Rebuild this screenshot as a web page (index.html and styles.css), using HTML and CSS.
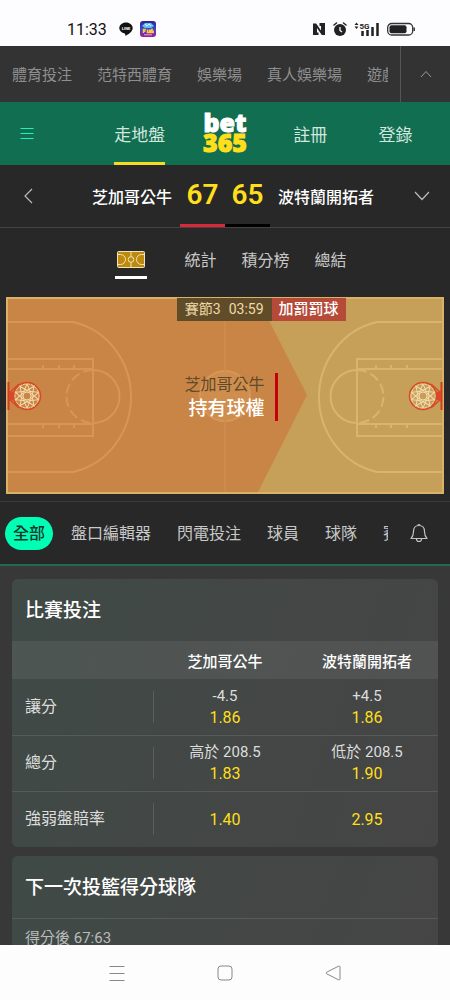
FILE: index.html
```html
<!DOCTYPE html>
<html lang="zh-Hant">
<head>
  <meta charset="UTF-8" />
  <meta name="viewport" content="width=device-width, initial-scale=1.0"/>
  <title>bet365</title>
  <link rel="stylesheet" href="styles.css">
</head>
<body>
  <div class="screen">
    <div class="status-bar">
      <div class="status-group">
        <span class="time">11:33</span>
        <svg class="line-icon" width="14" height="14" viewBox="0 0 14 14">
          <path d="M7 0.5C3.200 0.500 0.300 3 0.300 6.100c0 2.800 2.400 5 5.700 5.500l.4 2.200c3-1.300 7.300-4 7.300-7.700C13.700 3 10.800 0.500 7 0.500z" fill="#111"/>
          <text x="7" y="7.600" text-anchor="middle" font-size="4" font-weight="700" fill="#fff">LINE</text>
        </svg>
        <svg width="16" height="16" viewBox="0 0 16 16">
          <defs>
            <linearGradient id="app" x1="0" y1="0" x2="0" y2="1">
              <stop offset="0" stop-color="#3a1c8c"/>
              <stop offset="0.5" stop-color="#3a48c8"/>
              <stop offset="1" stop-color="#a01a9c"/>
            </linearGradient>
          </defs>
          <rect width="16" height="16" rx="3" fill="url(#app)"/>
          <path d="M2 5l3-3h6l3 3-3 2H5z" fill="#5cc4f4"/>
          <path d="M5 3l2 2 2-2 2 2" fill="none" stroke="#dff6ff"/>
          <path d="M3.500 12V8.500h2.500M3.500 10.200h2M7.500 8.500v3h2v-3M11 8.500v3h2.200v-1.200H11.500M11 8.500h2" fill="none" stroke="#ffc93c" stroke-width="1.500"/>
          <path d="M4 13.800h8" stroke="#f5a3d8"/>
        </svg>
      </div>
      <div class="status-group">
        <svg width="14" height="14" viewBox="0 0 14 14">
          <path d="M1 1.500h3.200L9 8.500V4H7.500V1H13v12H9.800L5 6v4.500h1.500V13H1z" fill="#222"/>
        </svg>
        <svg width="14" height="14" viewBox="0 0 14 14">
          <circle cx="7" cy="8" r="6" fill="#222"/>
          <path d="M1 3l2.500-2M13 3l-2.500-2" stroke="#222" stroke-width="1.500" stroke-linecap="round"/>
          <path d="M7 5v3.500l2 1.500" fill="none" stroke="#fff" stroke-width="1.300"/>
        </svg>
        <svg width="26" height="14" viewBox="0 0 26 14">
          <path d="M0.500 3L2.500 0.500L4.500 3zM0.500 4.500h4L2.500 7z" fill="#222"/>
          <text x="5.500" y="6.500" font-size="8" font-weight="700" fill="#222">5G</text>
          <path d="M8.500 14V9M13.500 14V8M18.500 14V5M23.500 14V1" stroke="#222" stroke-width="2.500"/>
        </svg>
        <svg width="28" height="14" viewBox="0 0 28 14">
          <rect x="0.700" y="1.500" width="25" height="11.500" rx="4" fill="none" stroke="#333" stroke-width="1.300"/>
          <rect x="2.500" y="3.300" width="17" height="8" rx="2" fill="#222"/>
          <path d="M27.200 5.500v3.500" stroke="#333" stroke-width="1.500"/>
        </svg>
      </div>
    </div>

    <nav class="product-nav">
      <div class="product-links">
        <a href="#">體育投注</a>
        <a href="#">范特西體育</a>
        <a href="#">娛樂場</a>
        <a href="#">真人娛樂場</a>
        <a href="#">遊戲</a>
      </div>
      <button class="collapse-btn" aria-label="收起">
        <svg width="12" height="8" viewBox="0 0 12 8"><path d="M1 7l5-5.500L11 7" fill="none" stroke="#999"/></svg>
      </button>
    </nav>

    <header class="header">
      <button class="menu-btn" aria-label="選單">
        <svg width="14" height="14" viewBox="0 0 14 14"><path d="M0.500 1.500h13M0.500 6.500h13M0.500 11.500h13" stroke="#1ef5b0" stroke-width="1.200"/></svg>
      </button>
      <a class="header-link active" href="#">走地盤</a>
      <a class="logo" href="#"><span>bet</span><span class="logo-num">365</span></a>
      <a class="header-link" href="#">註冊</a>
      <a class="header-link" href="#">登錄</a>
    </header>

    <section class="match-bar">
      <button class="arrow-btn" aria-label="返回">
        <svg width="10" height="16" viewBox="0 0 10 16"><path d="M9 1L2 8l7 7" fill="none" stroke="#bbb" stroke-width="1.200"/></svg>
      </button>
      <span class="team home">芝加哥公牛</span>
      <span class="score home-score">67</span>
      <span class="score away-score">65</span>
      <span class="team away">波特蘭開拓者</span>
      <button class="arrow-btn" aria-label="更多賽事">
        <svg width="16" height="10" viewBox="0 0 16 10"><path d="M1 1l7 7.500L15 1" fill="none" stroke="#bbb" stroke-width="1.200"/></svg>
      </button>
    </section>

    <section class="match-live">
      <div class="view-tabs">
        <button class="view-tab court-tab active" aria-label="球場">
          <svg width="28" height="17" viewBox="0 0 28 17">
            <rect x="0.500" y="0.500" width="27" height="16" rx="1" fill="#be8a0c" stroke="#efe3c2"/>
            <path d="M14 1v4.500M14 11.500V16M1 3.500h2.500a5 5 0 0 1 0 10H1M27 3.500h-2.500a5 5 0 0 0 0 10H27" fill="none" stroke="#efe3c2"/>
            <circle cx="14" cy="8.500" r="2.800" fill="none" stroke="#efe3c2"/>
          </svg>
        </button>
        <button class="view-tab">統計</button>
        <button class="view-tab">積分榜</button>
        <button class="view-tab">總結</button>
      </div>

      <div class="court">
        <svg class="court-svg" viewBox="0 0 438 197">
          <defs>
            <g id="half" fill="none" stroke-width="2">
              <path d="M1 25H67C102 33 125 65 125 100S102 167 67 175H1"/>
              <path d="M1 62H87V139H1M1 72H87M1 127H87"/>
              <path d="M87 73a26.500 26.500 0 0 1 0 53"/>
              <path d="M87 73a26.500 26.500 0 0 0 0 53" stroke-dasharray="10 4"/>
              <path d="M37 68v4M53 68v4M68 68v4M37 127v4M53 127v4M68 127v4"/>
            </g>
            <g id="hoop" fill="none">
              <path d="M2.500 85v28" stroke="#d23c20" stroke-width="2"/>
              <path d="M3 94l5 1v8l-5 1z" fill="#d84a2a"/>
              <path d="M3 96L13 87M3 102l10 9" stroke="#d84a2a" stroke-width="1.500"/>
              <circle cx="21" cy="99" r="13.500" stroke="#da4828" stroke-width="1.500"/>
              <g stroke="#f5dcae">
                <circle cx="21" cy="99" r="4"/>
                <circle cx="21" cy="99" r="12" stroke-dasharray="3 1"/>
                <path id="net" d="M17 96l4-9 4 9"/>
                <use href="#net" transform="rotate(36 21 99)"/>
                <use href="#net" transform="rotate(72 21 99)"/>
                <use href="#net" transform="rotate(108 21 99)"/>
                <use href="#net" transform="rotate(144 21 99)"/>
                <use href="#net" transform="rotate(180 21 99)"/>
                <use href="#net" transform="rotate(216 21 99)"/>
                <use href="#net" transform="rotate(252 21 99)"/>
                <use href="#net" transform="rotate(288 21 99)"/>
                <use href="#net" transform="rotate(324 21 99)"/>
              </g>
            </g>
          </defs>
          <rect width="438" height="197" fill="#c6a059"/>
          <path d="M0 0H251L301 98L251 197H0z" fill="#c98545"/>
          <use href="#half" stroke="#d79556"/>
          <use href="#half" stroke="#d9b46d" transform="translate(438 0) scale(-1 1)"/>
          <circle cx="219" cy="99" r="25" fill="#cf8e4e" stroke="#d79556" stroke-width="2"/>
          <path d="M219 0V197" stroke="#d08e4e" stroke-width="1.500"/>
          <rect x="1" y="1" width="436" height="195" fill="none" stroke="#d9b268" stroke-width="2"/>
          <use href="#hoop"/>
          <use href="#hoop" transform="translate(438 0) scale(-1 1)"/>
        </svg>
        <div class="clock">
          <span class="period"><span>賽節3</span><span>03:59</span></span>
          <span class="event">加罰罰球</span>
        </div>
        <div class="possession">
          <span class="possession-team">芝加哥公牛</span>
          <span class="possession-text">持有球權</span>
        </div>
      </div>
    </section>

    <nav class="market-nav">
      <div class="market-links">
        <button class="market-tab active">全部</button>
        <button class="market-tab">盤口編輯器</button>
        <button class="market-tab">閃電投注</button>
        <button class="market-tab">球員</button>
        <button class="market-tab">球隊</button>
        <button class="market-tab">賽節</button>
      </div>
      <button class="bell-btn" aria-label="通知">
        <svg width="18" height="20" viewBox="0 0 18 20">
          <path d="M1 15.500C3 13.500 3.500 12 3.500 8.500C3.500 5 5.500 2.500 9 2.500S14.500 5 14.500 8.500C14.500 12 15 13.500 17 15.500z" fill="none" stroke="#c4c4c4" stroke-width="1.200" stroke-linejoin="round"/>
          <path d="M8 2.500a1 1 0 0 1 2 0M6.500 16a2.500 2.500 0 0 0 5 0" fill="none" stroke="#c4c4c4" stroke-width="1.200"/>
        </svg>
      </button>
    </nav>

    <main class="markets">
      <section class="card">
        <h2 class="card-title">比賽投注</h2>
        <table class="odds-table">
          <thead>
            <tr><td></td><th scope="col">芝加哥公牛</th><th scope="col">波特蘭開拓者</th></tr>
          </thead>
          <tbody>
            <tr>
              <th scope="row"><div class="row-label">讓分</div></th>
              <td><span class="line">-4.5</span><span class="odds">1.86</span></td>
              <td><span class="line">+4.5</span><span class="odds">1.86</span></td>
            </tr>
            <tr>
              <th scope="row"><div class="row-label">總分</div></th>
              <td><span class="line">高於 208.5</span><span class="odds">1.83</span></td>
              <td><span class="line">低於 208.5</span><span class="odds">1.90</span></td>
            </tr>
            <tr>
              <th scope="row"><div class="row-label">強弱盤賠率</div></th>
              <td><span class="odds">1.40</span></td>
              <td><span class="odds">2.95</span></td>
            </tr>
          </tbody>
        </table>
      </section>

      <section class="card">
        <h2 class="card-title">下一次投籃得分球隊</h2>
        <p class="card-sub">得分後 67:63</p>
      </section>
    </main>

    <div class="system-nav">
      <button aria-label="最近"><svg width="16" height="16" viewBox="0 0 16 16"><path d="M0.500 1.500h15M0.500 8.500h15M0.500 15.500h15" stroke="#888"/></svg></button>
      <button aria-label="主畫面"><svg width="16" height="16" viewBox="0 0 16 16"><rect x="1" y="1" width="14" height="14" rx="3" fill="none" stroke="#888"/></svg></button>
      <button aria-label="返回"><svg width="16" height="16" viewBox="0 0 16 16"><path d="M1.500 7.300L13.500 1.200Q15 0.800 15 2V14Q15 15.200 13.500 14.800L1.500 8.700Q0.500 8 1.500 7.300z" fill="none" stroke="#888"/></svg></button>
    </div>
  </div>
</body>
</html>
```

FILE: styles.css
```css
* {
  box-sizing: border-box;
}

body {
  margin: 0;
  background: #383838;
  color: #ddd;
  font-family: Roboto, "Noto Sans CJK TC", sans-serif;
  font-size: 16px;
}

button {
  padding: 0;
  border: none;
  background: none;
  color: inherit;
  font: inherit;
  cursor: pointer;
}

a {
  color: inherit;
  text-decoration: none;
}

svg {
  display: block;
}

.screen {
  display: flex;
  flex-direction: column;
  height: 100vh;
  overflow: hidden;
}

.screen > * {
  flex-shrink: 0;
}

/* phone status bar */
.status-bar {
  display: flex;
  justify-content: space-between;
  height: 46px;
  padding: 12px 35px 0 67px;
  background: #fdfcfe;
}

.status-group {
  display: flex;
  align-items: center;
  gap: 7px;
}

.time {
  color: #111;
}

.line-icon {
  margin-left: 5px;
}

/* products */
.product-nav {
  display: flex;
  height: 56px;
  background: #333;
  color: #8f8f8f;
  font-size: 15px;
}

.product-links {
  display: flex;
  flex: 1;
  align-items: center;
  gap: 25px;
  margin: 0 12px;
  padding-bottom: 2px;
  overflow: hidden;
  white-space: nowrap;
}

.collapse-btn {
  display: flex;
  align-items: center;
  justify-content: center;
  width: 50px;
  border-left: 1px solid #555;
}

/* green header */
.header {
  display: grid;
  grid-template-columns: repeat(5, 1fr);
  height: 63px;
  padding: 0 12px;
  background: #126e51;
  color: #d3e6df;
  font-size: 17px;
}

.menu-btn {
  display: flex;
  align-items: center;
  padding-left: 8px;
}

.header-link {
  display: flex;
  align-items: center;
  justify-self: center;
  border-top: 3px solid transparent;
  border-bottom: 3px solid transparent;
}

.header-link.active {
  border-bottom-color: #f5dc1e;
}

.logo {
  display: flex;
  flex-direction: column;
  align-items: center;
  justify-content: center;
  padding-bottom: 3px;
  color: #fff;
  font-family: "Open Sans", sans-serif;
  font-size: 25px;
  font-weight: 800;
  line-height: 20px;
  -webkit-text-stroke: 1px currentColor;
}

.logo-num {
  color: #ffdf1b;
}

/* score line */
.match-bar {
  display: grid;
  grid-template-columns: 56px 1fr 45px 45px 1fr 56px;
  align-items: center;
  height: 63px;
  border-bottom: 1px solid #444;
  background: #282828;
}

.arrow-btn {
  display: flex;
  align-items: center;
  justify-content: center;
  height: 100%;
}

.team {
  color: #fff;
  font-weight: 500;
  white-space: nowrap;
}

.home {
  padding-right: 8px;
  text-align: right;
}

.away {
  padding-left: 8px;
}

.score {
  height: 62px;
  border-bottom: 3px solid #000;
  color: #ffdf1b;
  font-size: 28px;
  font-weight: 600;
  line-height: 60px;
  text-align: center;
}

.home-score {
  border-bottom-color: #d9283a;
}

/* live view */
.match-live {
  padding-bottom: 7px;
  background: #282828;
}

.view-tabs {
  display: flex;
  align-items: center;
  justify-content: center;
  gap: 25px;
  height: 62px;
  margin-bottom: 7px;
  padding-left: 12px;
}

.view-tab {
  color: #c8c8c8;
}

.court-tab {
  display: flex;
  justify-content: center;
  width: 32px;
  margin-right: 12px;
  padding: 12px 0 8px;
  border-bottom: 3px solid transparent;
}

.court-tab.active {
  border-bottom-color: #fff;
}

.court {
  position: relative;
  margin: 0 6px;
}

.court-svg {
  width: 100%;
}

.clock {
  position: absolute;
  top: 1px;
  left: 39%;
  display: flex;
  height: 23px;
  line-height: 23px;
  white-space: nowrap;
}

.period {
  display: flex;
  gap: 8px;
  padding: 0 8px;
  background: #614c29;
  color: #f0dba8;
  font-size: 14px;
}

.event {
  padding: 0 7px;
  background: #b54a38;
  color: #fff;
  font-size: 15px;
  font-weight: 500;
}

.possession {
  position: absolute;
  top: 76px;
  right: 38%;
  display: flex;
  flex-direction: column;
  padding-right: 10px;
  border-right: 3px solid #c4000c;
  line-height: 24px;
  text-align: right;
}

.possession-team {
  color: #5f4a2c;
}

.possession-text {
  color: #fff;
  font-size: 19px;
  font-weight: 500;
}

/* market filter */
.market-nav {
  display: flex;
  align-items: center;
  height: 65px;
  border-top: 1px solid #3a3a3a;
  border-bottom: 2px solid #1e6b50;
  background: #282828;
}

.market-links {
  display: flex;
  flex: 1;
  gap: 10px;
  padding-left: 5px;
  overflow: hidden;
  white-space: nowrap;
}

.market-tab {
  flex-shrink: 0;
  height: 33px;
  padding: 0 8px 2px;
  border-radius: 17px;
  color: #c8c8c8;
}

.market-tab.active {
  background: #00ffb4;
  color: #14352b;
  font-weight: 500;
}

.bell-btn {
  display: flex;
  justify-content: center;
  width: 62px;
}

/* markets */
.markets {
  display: flex;
  flex: 1 1 0;
  flex-direction: column;
  gap: 9px;
  min-height: 0;
  padding: 13px 12px 0;
  overflow: hidden;
}

.card {
  flex-shrink: 0;
  border-radius: 6px;
  background: linear-gradient(110deg, #3f4a46, #434745 50%, #454545);
  overflow: hidden;
}

.card-title {
  margin: 0;
  padding: 2px 13px 0;
  color: #fff;
  font-size: 19px;
  font-weight: 500;
  line-height: 60px;
}

.odds-table {
  width: 100%;
  border-collapse: collapse;
  table-layout: fixed;
  text-align: center;
}

.odds-table th,
.odds-table td {
  padding: 0;
}

.odds-table thead {
  height: 38px;
  background: rgba(255, 255, 255, 0.07);
  color: #fff;
  font-size: 15px;
}

.odds-table thead th {
  font-weight: 500;
}

.odds-table tbody tr {
  height: 56px;
}

.odds-table tbody tr + tr {
  border-top: 1px solid #565a58;
}

.row-label {
  height: 32px;
  padding-left: 13px;
  border-right: 1px solid #5a5e5c;
  font-weight: 400;
  line-height: 32px;
  text-align: left;
}

.line,
.odds {
  display: block;
  line-height: 21px;
}

.line {
  font-size: 15px;
}

.odds {
  color: #ffdf1b;
}

.card-sub {
  margin: 0;
  padding: 0 13px;
  border-top: 1px solid #565a58;
  color: #bbb;
  font-size: 15px;
  line-height: 38px;
}

/* android buttons */
.system-nav {
  display: flex;
  align-items: center;
  justify-content: center;
  gap: 92px;
  height: 55px;
  background: #fdfdfd;
}
```
